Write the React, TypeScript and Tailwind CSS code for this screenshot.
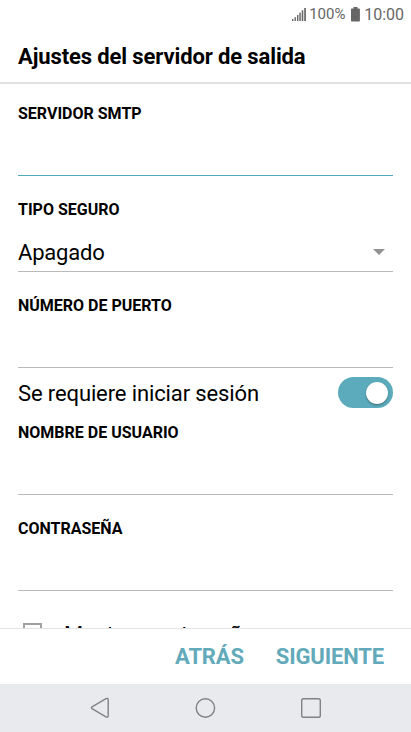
import type { ReactNode } from "react";

type FieldProps = {
  label: string;
  className?: string;
  lineClass?: string;
  children?: ReactNode;
};

function Field({ label, className = "h-24 pt-6", lineClass = "bg-[#b9b9b9]", children }: FieldProps) {
  return (
    <section className={`flex shrink-0 flex-col ${className}`}>
      <h2 className="text-[16px] leading-5 font-bold whitespace-nowrap">{label}</h2>
      <div className="flex flex-1 flex-col justify-end">{children}</div>
      <div className={`h-px shrink-0 ${lineClass}`} />
    </section>
  );
}

function StatusBar() {
  return (
    <div className="flex h-7 shrink-0 items-center justify-end pr-[7px] text-[#666]">
      <svg width="14" height="14" viewBox="0 0 14 14" fill="currentColor">
        <rect x="0" y="12" width="1.4" height="2" />
        <rect x="2.5" y="10.2" width="1.4" height="3.8" />
        <rect x="5" y="8" width="1.4" height="6" />
        <rect x="7.3" y="5.7" width="1.5" height="8.3" />
        <rect x="9.7" y="3.3" width="1.6" height="10.7" />
        <rect x="12.2" y="1" width="1.7" height="13" />
      </svg>
      <span className="ml-[3px] w-[37px] pt-px text-[15px] whitespace-nowrap">100%</span>
      <svg className="ml-[5px]" width="9" height="15" viewBox="0 0 9 15" fill="currentColor">
        <path d="M2.5 0h4v1.4h1.6a.8.8 0 0 1 .8.8v11.6a.8.8 0 0 1-.8.8H.8a.8.8 0 0 1-.8-.8V2.2a.8.8 0 0 1 .8-.8h1.7z" />
      </svg>
      <span className="ml-1 pt-px text-[16px] whitespace-nowrap">10:00</span>
    </div>
  );
}

function NavigationBar() {
  return (
    <nav className="flex h-12 shrink-0 items-center justify-between bg-[#e8eaed] pr-[89px] pl-[90px] text-[#808285]">
      <svg width="20" height="22" viewBox="0 0 20 22" fill="none" stroke="currentColor" strokeWidth="1.4">
        <path d="M2 9.8 16 1.7c1.2-.7 2.2-.2 2.2 1v16c0 1.3-1 1.8-2.2 1.1L2 11.7c-.8-.5-.8-1.4 0-1.9z" />
      </svg>
      <svg width="22" height="22" viewBox="0 0 22 22" fill="none" stroke="currentColor" strokeWidth="1.4">
        <circle cx="11.4" cy="11" r="9.2" />
      </svg>
      <svg width="22" height="22" viewBox="0 0 22 22" fill="none" stroke="currentColor" strokeWidth="1.4">
        <rect x="1.7" y="1.7" width="18.6" height="18.6" rx="1.8" />
      </svg>
    </nav>
  );
}

export default function App() {
  return (
    <div className="flex h-[732px] w-[411px] flex-col overflow-hidden bg-white font-['Roboto',sans-serif] text-black">
      <StatusBar />
      <header className="flex h-14 shrink-0 items-center border-b-2 border-[#e1e1e1] px-[18px] pt-0.5">
        <h1 className="text-[22px] font-bold tracking-[-0.12px] whitespace-nowrap">Ajustes del servidor de salida</h1>
      </header>

      <main className="flex min-h-0 flex-1 flex-col overflow-hidden px-[18px]">
        <Field label="SERVIDOR SMTP" className="h-[92px] pt-5" lineClass="bg-[#4fa8bb]" />
        <Field label="TIPO SEGURO">
          <div className="flex h-[38px] items-center justify-between pr-2 text-[22px] tracking-[-0.2px]">
            <span>Apagado</span>
            <svg width="12" height="6" viewBox="0 0 12 6" fill="#929292">
              <path d="M0 0h12L6 6z" />
            </svg>
          </div>
        </Field>
        <Field label="NÚMERO DE PUERTO" />
        <div className="flex h-[50px] shrink-0 items-center justify-between">
          <span className="pt-px text-[22px] tracking-[-0.12px]">Se requiere iniciar sesión</span>
          <button className="mb-px flex h-[31px] w-[55px] items-center justify-end rounded-full bg-[#5babbc] pr-[5px]" aria-label="Se requiere iniciar sesión">
            <span className="size-[22px] rounded-full bg-white shadow-[0_1px_2px_rgba(0,0,0,0.4)]" />
          </button>
        </div>
        <Field label="NOMBRE DE USUARIO" className="h-[77px] pt-[5px]" />
        <Field label="CONTRASEÑA" />
        <div className="flex shrink-0 items-start pt-8 pl-[5px]">
          <span className="size-[19px] border-2 border-[#a0a0a0]" />
          <span className="ml-[22px] text-[22px] leading-6 tracking-[-0.12px]">Mostrar contraseña</span>
        </div>
      </main>

      <footer className="flex h-14 shrink-0 items-center justify-end gap-8 border-t border-[#e3e3e3] pr-[27px] text-[22px] font-bold tracking-[-0.15px] text-[#62aaba]">
        <button>ATRÁS</button>
        <button>SIGUIENTE</button>
      </footer>
      <NavigationBar />
    </div>
  );
}
